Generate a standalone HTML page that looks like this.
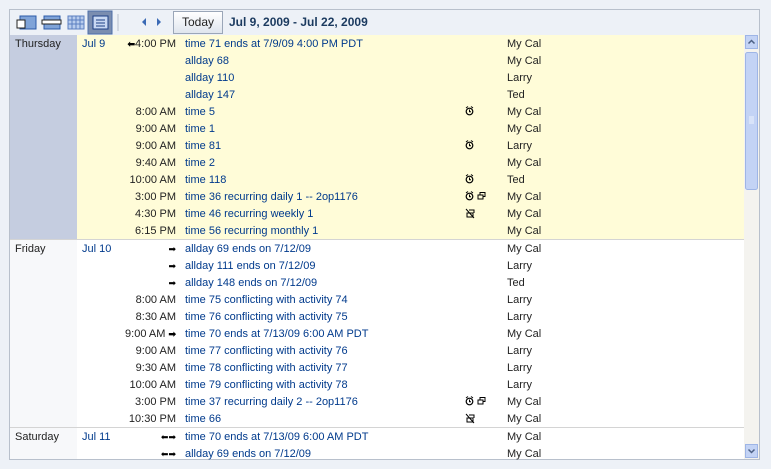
<!DOCTYPE html>
<html><head><style>
body{margin:0;width:771px;height:469px;background:#edf1f7;font:11px "Liberation Sans",sans-serif;position:relative;overflow:hidden}
#frame{position:absolute;left:9px;top:9px;width:751px;height:451px;border:1px solid #b8c0cc;background:#fff;box-sizing:border-box}
#tb{position:absolute;left:10px;top:10px;width:749px;height:25px;background:#edf1f7}
.r{position:absolute;left:10px;height:17px;width:734px;line-height:17px;color:#003a8c;white-space:nowrap}
.r span{position:absolute;top:1px}
.d{left:5px;color:#222}
.dt{left:72px}
.tm{right:568px;color:#222;text-align:right}
.ar{font-size:9px;color:#000}
.ti{left:175px}
.ic{left:455px;top:3px!important}
.c{left:497px;color:#222}
.sec{position:absolute;left:10px;width:734px}
</style></head><body>
<svg width="0" height="0" style="position:absolute"><defs>
<g id="al"><circle cx="4.5" cy="5.5" r="3.3" fill="none" stroke="#000" stroke-width="1.2"/><path d="M4.5 3.5v2.2h1.5M1 2l2-1.5M8 2L6 .5" stroke="#000" fill="none"/></g>
<g id="rc"><rect x="1" y="4" width="5" height="4" fill="none" stroke="#000"/><path d="M3 4V1.5h5v4H6" fill="none" stroke="#000"/></g>
<g id="nr"><path d="M1 1l8 9M2 5h6v4H2zM4 2h5v3" fill="none" stroke="#000"/></g>
</defs></svg>
<div id="frame"></div>
<div id="tb">
 <svg width="120" height="25" style="position:absolute;left:0;top:0">
  <rect x="10" y="6" width="16" height="13" fill="#7fa3d8" stroke="#2b5aa8"/><rect x="7" y="10" width="8" height="8" fill="#fff" stroke="#222"/>
  <rect x="34" y="6" width="16" height="13" fill="#7fa3d8" stroke="#2b5aa8"/><rect x="32" y="10" width="19" height="4" fill="#fff" stroke="#222"/>
  <rect x="58" y="6" width="16" height="13" fill="#b9cdee" stroke="#5a7fc0"/>
  <path d="M62 6v13M66 6v13M70 6v13M58 10h16M58 14h16" stroke="#5a7fc0"/>
  <rect x="78" y="1" width="24" height="23" fill="#7a8db0" stroke="#4d6fa8"/>
  <rect x="83" y="6" width="15" height="13" fill="#c9d8f3" stroke="#1d3f86"/>
  <path d="M86 10h9M86 13h9M86 16h9" stroke="#1d3f86"/>
  <path d="M108 4v17" stroke="#b8c0cc"/>
 </svg>
 <svg width="60" height="25" style="position:absolute;left:125px;top:0"><path d="M11 8l-4 4 4 4z" fill="#3b6ab5"/><path d="M22 8l4 4-4 4z" fill="#3b6ab5"/></svg>
 <div style="position:absolute;left:163px;top:1px;width:48px;height:21px;border:1px solid #9aa6b8;background:linear-gradient(#fff,#dfe5ee);line-height:20px;text-align:center;color:#222;font-size:12px">Today</div>
 <div style="position:absolute;left:219px;top:0;line-height:24px;font-weight:bold;font-size:12px;color:#1b3a5f">Jul 9, 2009 - Jul 22, 2009</div>
</div>
<div class="sec" style="top:35px;height:204px;background:#fffcd8"></div>
<div style="position:absolute;left:10px;top:35px;width:67px;height:204px;background:#c5cde0"></div>
<div class="sec" style="top:239px;height:1px;background:#d4d4d4"></div>
<div style="position:absolute;left:10px;top:240px;width:67px;height:187px;background:#f7f8fa"></div>
<div class="sec" style="top:427px;height:1px;background:#d4d4d4"></div>
<div style="position:absolute;left:10px;top:428px;width:67px;height:31px;background:#f7f8fa"></div>
<div style="position:absolute;left:744px;top:35px;width:15px;height:424px;background:#f4f3ef"></div>
<svg width="15" height="424" style="position:absolute;left:744px;top:35px">
 <rect x="1.5" y="0.5" width="12" height="13" fill="#c3d3f5" stroke="#9eb5e6"/><path d="M4.5 8.5l3-3 3 3" stroke="#4d6185" stroke-width="1.5" fill="none"/>
 <rect x="1.5" y="17.5" width="12" height="137" rx="2" fill="#c3d3f5" stroke="#9eb5e6"/><path d="M5 82h5M5 84h5M5 86h5M5 88h5" stroke="#eef3fd"/>
 <rect x="1.5" y="409.5" width="12" height="13" fill="#c3d3f5" stroke="#9eb5e6"/><path d="M4.5 14.5" /><path d="M4.5 414.5l3 3 3-3" stroke="#4d6185" stroke-width="1.5" fill="none"/>
</svg>

<div class="r" style="top:35px"><span class="d">Thursday</span><span class="dt">Jul 9</span><span class="tm"><b class="ar">&#x2B05;</b>4:00 PM</span><span class="ti">time 71 ends at 7/9/09 4:00 PM PDT</span><span class="c">My Cal</span></div>
<div class="r" style="top:52px"><span class="ti">allday 68</span><span class="c">My Cal</span></div>
<div class="r" style="top:69px"><span class="ti">allday 110</span><span class="c">Larry</span></div>
<div class="r" style="top:86px"><span class="ti">allday 147</span><span class="c">Ted</span></div>
<div class="r" style="top:103px"><span class="tm">8:00 AM</span><span class="ti">time 5</span><svg class="ic" style="position:absolute;left:455px;top:3px" width="22" height="11"><use href="#al"/></svg><span class="c">My Cal</span></div>
<div class="r" style="top:120px"><span class="tm">9:00 AM</span><span class="ti">time 1</span><span class="c">My Cal</span></div>
<div class="r" style="top:137px"><span class="tm">9:00 AM</span><span class="ti">time 81</span><svg style="position:absolute;left:455px;top:3px" width="22" height="11"><use href="#al"/></svg><span class="c">Larry</span></div>
<div class="r" style="top:154px"><span class="tm">9:40 AM</span><span class="ti">time 2</span><span class="c">My Cal</span></div>
<div class="r" style="top:171px"><span class="tm">10:00 AM</span><span class="ti">time 118</span><svg style="position:absolute;left:455px;top:3px" width="22" height="11"><use href="#al"/></svg><span class="c">Ted</span></div>
<div class="r" style="top:188px"><span class="tm">3:00 PM</span><span class="ti">time 36 recurring daily 1 -- 2op1176</span><svg style="position:absolute;left:455px;top:3px" width="22" height="11"><use href="#al"/><use href="#rc" x="12"/></svg><span class="c">My Cal</span></div>
<div class="r" style="top:205px"><span class="tm">4:30 PM</span><span class="ti">time 46 recurring weekly 1</span><svg style="position:absolute;left:455px;top:3px" width="22" height="11"><use href="#nr"/></svg><span class="c">My Cal</span></div>
<div class="r" style="top:222px"><span class="tm">6:15 PM</span><span class="ti">time 56 recurring monthly 1</span><span class="c">My Cal</span></div>

<div class="r" style="top:240px"><span class="d">Friday</span><span class="dt">Jul 10</span><span class="tm ar">&#x27A1;</span><span class="ti">allday 69 ends on 7/12/09</span><span class="c">My Cal</span></div>
<div class="r" style="top:257px"><span class="tm ar">&#x27A1;</span><span class="ti">allday 111 ends on 7/12/09</span><span class="c">Larry</span></div>
<div class="r" style="top:274px"><span class="tm ar">&#x27A1;</span><span class="ti">allday 148 ends on 7/12/09</span><span class="c">Ted</span></div>
<div class="r" style="top:291px"><span class="tm">8:00 AM</span><span class="ti">time 75 conflicting with activity 74</span><span class="c">Larry</span></div>
<div class="r" style="top:308px"><span class="tm">8:30 AM</span><span class="ti">time 76 conflicting with activity 75</span><span class="c">Larry</span></div>
<div class="r" style="top:325px"><span class="tm">9:00 AM <b class="ar">&#x27A1;</b></span><span class="ti">time 70 ends at 7/13/09 6:00 AM PDT</span><span class="c">My Cal</span></div>
<div class="r" style="top:342px"><span class="tm">9:00 AM</span><span class="ti">time 77 conflicting with activity 76</span><span class="c">Larry</span></div>
<div class="r" style="top:359px"><span class="tm">9:30 AM</span><span class="ti">time 78 conflicting with activity 77</span><span class="c">Larry</span></div>
<div class="r" style="top:376px"><span class="tm">10:00 AM</span><span class="ti">time 79 conflicting with activity 78</span><span class="c">Larry</span></div>
<div class="r" style="top:393px"><span class="tm">3:00 PM</span><span class="ti">time 37 recurring daily 2 -- 2op1176</span><svg style="position:absolute;left:455px;top:3px" width="22" height="11"><use href="#al"/><use href="#rc" x="12"/></svg><span class="c">My Cal</span></div>
<div class="r" style="top:410px"><span class="tm">10:30 PM</span><span class="ti">time 66</span><svg style="position:absolute;left:455px;top:3px" width="22" height="11"><use href="#nr"/></svg><span class="c">My Cal</span></div>

<div class="r" style="top:428px"><span class="d">Saturday</span><span class="dt">Jul 11</span><span class="tm ar">&#x2B05;&#x27A1;</span><span class="ti">time 70 ends at 7/13/09 6:00 AM PDT</span><span class="c">My Cal</span></div>
<div class="r" style="top:445px"><span class="tm ar">&#x2B05;&#x27A1;</span><span class="ti">allday 69 ends on 7/12/09</span><span class="c">My Cal</span></div>
</body></html>
